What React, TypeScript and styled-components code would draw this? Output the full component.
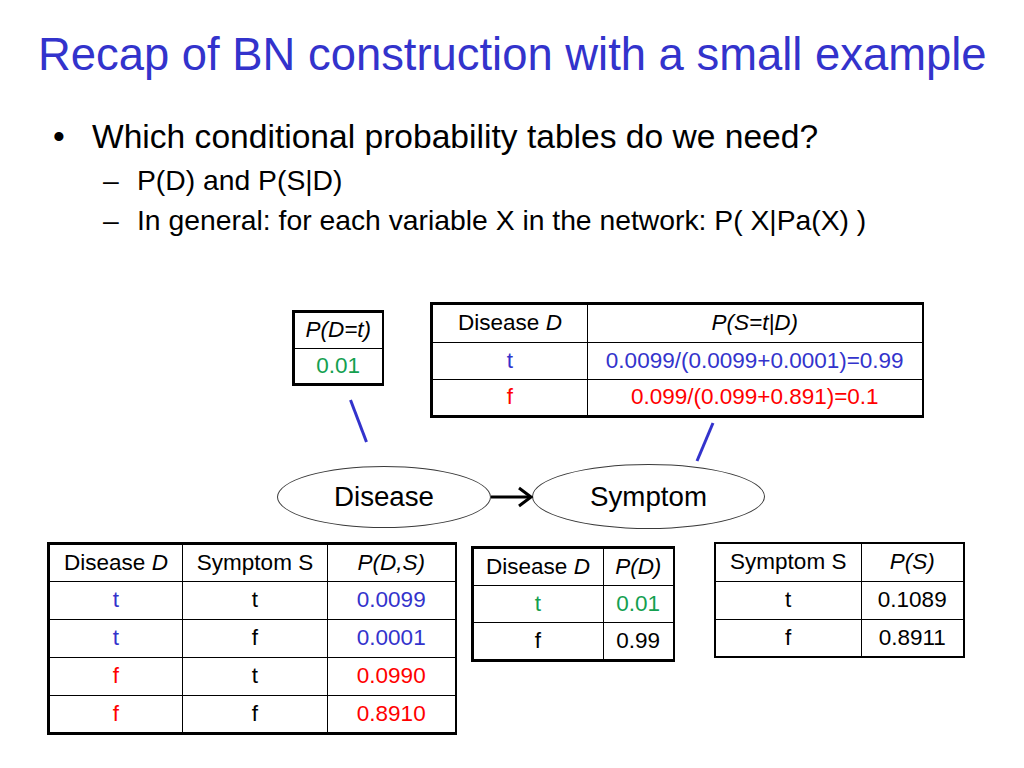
import React from "react";
import styled, { createGlobalStyle, css } from "styled-components";

const Global = createGlobalStyle`
  html, body { margin: 0; padding: 0; background: #fff; }
  body { font-family: "Liberation Sans", Arial, sans-serif; color: #000; }
`;

type Tone = "black" | "blue" | "red" | "green";
const toneColor: Record<Tone, string> = {
  black: "#000000",
  blue: "#3333cc",
  red: "#ff0000",
  green: "#14a050",
};

const Slide = styled.div`
  width: 1024px;
  height: 768px;
  overflow: hidden;
  background: #fff;
  display: flex;
  flex-direction: column;
`;

const Header = styled.header`
  height: 100px;
  padding: 30px 0 0 38px;
  box-sizing: border-box;
`;

const Title = styled.h1`
  margin: 0;
  font-size: 45.4px;
  line-height: 50px;
  font-weight: normal;
  color: #3333cc;
  white-space: nowrap;
`;

const Bullets = styled.ul`
  list-style: none;
  margin: 0;
  padding: 17px 0 0 0;
  height: 195px;
  box-sizing: border-box;
`;

const Item = styled.li<{ $level: 1 | 2 }>`
  display: flex;
  white-space: nowrap;
  ${(p) =>
    p.$level === 1
      ? css`
          font-size: 33.6px;
          line-height: 40px;
          padding-left: 53px;
        `
      : css`
          font-size: 28.3px;
          line-height: 34px;
          padding-left: 103px;
          margin-top: 6px;
        `}
`;

const Marker = styled.span<{ $level: 1 | 2 }>`
  flex: none;
  width: ${(p) => (p.$level === 1 ? 39 : 34)}px;
`;

const Diagram = styled.section`
  position: relative;
  height: 240px;
  flex: none;
`;

const Node = styled.div<{ $x: number; $y: number }>`
  position: absolute;
  left: ${(p) => p.$x}px;
  top: ${(p) => p.$y}px;
`;

const Ellipse = styled.div<{ $w: number; $h: number }>`
  width: ${(p) => p.$w}px;
  height: ${(p) => p.$h}px;
  box-sizing: border-box;
  border: 1px solid #3a3a3a;
  border-radius: 50%;
  display: flex;
  align-items: center;
  justify-content: center;
  font-size: 27.7px;
  background: #fff;
`;

const Connectors = styled.svg`
  position: absolute;
  inset: 0;
  width: 100%;
  height: 100%;
  pointer-events: none;
  overflow: visible;
`;

const BottomRow = styled.section`
  display: flex;
  align-items: flex-start;
  padding-left: 47px;
`;

const TableSlot = styled.div<{ $ml: number; $mt: number }>`
  margin-left: ${(p) => p.$ml}px;
  margin-top: ${(p) => p.$mt}px;
`;

const Grid = styled.table<{ $heavy?: boolean }>`
  border-collapse: collapse;
  table-layout: fixed;
  border: 2px solid #000;
  ${(p) =>
    p.$heavy &&
    css`
      border-top-width: 3px;
      border-left-width: 3px;
      border-bottom-width: 3px;
    `}
  font-size: 22.5px;
`;

const Row = styled.tr<{ $h: number }>`
  height: ${(p) => p.$h}px;
`;

const Cell = styled.td<{ $tone?: Tone }>`
  border: 1px solid #000;
  padding: 0;
  text-align: center;
  vertical-align: middle;
  white-space: nowrap;
  line-height: 1;
  color: ${(p) => toneColor[p.$tone ?? "black"]};
`;

const It = styled.i`
  font-style: italic;
`;

type CellSpec = { text: React.ReactNode; tone?: Tone };

function DataTable({
  widths,
  heights,
  rows,
  heavy,
}: {
  widths: number[];
  heights: number[];
  rows: CellSpec[][];
  heavy?: boolean;
}) {
  return (
    <Grid $heavy={heavy}>
      <colgroup>
        {widths.map((w, i) => (
          <col key={i} style={{ width: w }} />
        ))}
      </colgroup>
      <tbody>
        {rows.map((r, ri) => (
          <Row key={ri} $h={heights[ri]}>
            {r.map((c, ci) => (
              <Cell key={ci} $tone={c.tone}>
                {c.text}
              </Cell>
            ))}
          </Row>
        ))}
      </tbody>
    </Grid>
  );
}

const diseaseD = (
  <>
    Disease <It>D</It>
  </>
);

export default function App() {
  return (
    <>
      <Global />
      <Slide>
        <Header>
          <Title>Recap of BN construction with a small example</Title>
        </Header>
        <Bullets>
          <Item $level={1}>
            <Marker $level={1}>•</Marker>
            Which conditional probability tables do we need?
          </Item>
          <Item $level={2}>
            <Marker $level={2}>–</Marker>
            P(D) and P(S|D)
          </Item>
          <Item $level={2}>
            <Marker $level={2}>–</Marker>
            In general: for each variable X in the network: P( X|Pa(X) )
          </Item>
        </Bullets>
        <Diagram>
          <Node $x={292} $y={15}>
            <DataTable
              heavy
              widths={[89]}
              heights={[37, 36]}
              rows={[
                [{ text: <It>P(D=t)</It> }],
                [{ text: "0.01", tone: "green" }],
              ]}
            />
          </Node>
          <Node $x={430} $y={7}>
            <DataTable
              heavy
              widths={[156, 335]}
              heights={[39, 37, 37]}
              rows={[
                [{ text: diseaseD }, { text: <It>P(S=t|D)</It> }],
                [
                  { text: "t", tone: "blue" },
                  { text: "0.0099/(0.0099+0.0001)=0.99", tone: "blue" },
                ],
                [
                  { text: "f", tone: "red" },
                  { text: "0.099/(0.099+0.891)=0.1", tone: "red" },
                ],
              ]}
            />
          </Node>
          <Node $x={277} $y={171}>
            <Ellipse $w={214} $h={62}>Disease</Ellipse>
          </Node>
          <Node $x={532} $y={169}>
            <Ellipse $w={233} $h={65}>Symptom</Ellipse>
          </Node>
          <Connectors viewBox="0 0 1024 240">
            <line x1="350.5" y1="105" x2="366.5" y2="147" stroke="#3333cc" strokeWidth="3" />
            <line x1="713" y1="128" x2="697" y2="166" stroke="#3333cc" strokeWidth="3" />
            <line x1="491" y1="202" x2="530" y2="202" stroke="#000" strokeWidth="3" />
            <polyline
              points="519,193 531,202 519,211"
              fill="none"
              stroke="#000"
              strokeWidth="3"
              strokeLinejoin="miter"
            />
          </Connectors>
        </Diagram>
        <BottomRow>
          <TableSlot $ml={0} $mt={7}>
            <DataTable
              heavy
              widths={[134, 145, 128]}
              heights={[38, 38, 38, 38, 38]}
              rows={[
                [
                  { text: diseaseD },
                  { text: "Symptom S" },
                  { text: <It>P(D,S)</It> },
                ],
                [
                  { text: "t", tone: "blue" },
                  { text: "t" },
                  { text: "0.0099", tone: "blue" },
                ],
                [
                  { text: "t", tone: "blue" },
                  { text: "f" },
                  { text: "0.0001", tone: "blue" },
                ],
                [
                  { text: "f", tone: "red" },
                  { text: "t" },
                  { text: "0.0990", tone: "red" },
                ],
                [
                  { text: "f", tone: "red" },
                  { text: "f" },
                  { text: "0.8910", tone: "red" },
                ],
              ]}
            />
          </TableSlot>
          <TableSlot $ml={14} $mt={11}>
            <DataTable
              heavy
              widths={[131, 71]}
              heights={[38, 37, 38]}
              rows={[
                [{ text: diseaseD }, { text: <It>P(D)</It> }],
                [
                  { text: "t", tone: "green" },
                  { text: "0.01", tone: "green" },
                ],
                [{ text: "f" }, { text: "0.99" }],
              ]}
            />
          </TableSlot>
          <TableSlot $ml={39} $mt={7}>
            <DataTable
              widths={[146, 103]}
              heights={[38, 38, 38]}
              rows={[
                [{ text: "Symptom S" }, { text: <It>P(S)</It> }],
                [{ text: "t" }, { text: "0.1089" }],
                [{ text: "f" }, { text: "0.8911" }],
              ]}
            />
          </TableSlot>
        </BottomRow>
      </Slide>
    </>
  );
}
